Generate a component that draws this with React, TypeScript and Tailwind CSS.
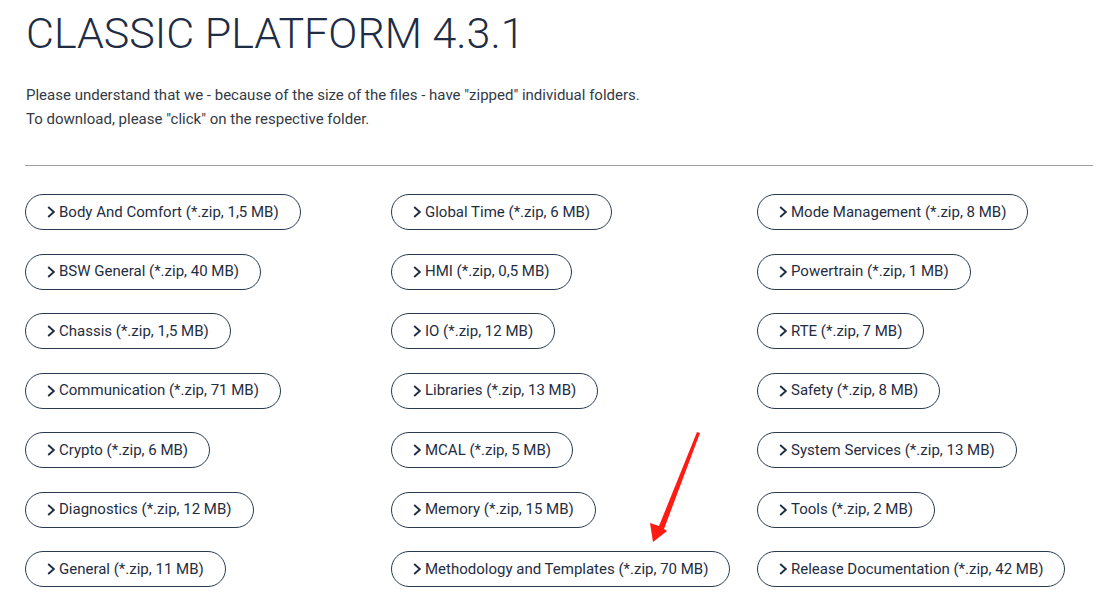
import React from "react";

const items: string[] = [
  "Body And Comfort (*.zip, 1,5 MB)",
  "Global Time (*.zip, 6 MB)",
  "Mode Management (*.zip, 8 MB)",
  "BSW General (*.zip, 40 MB)",
  "HMI (*.zip, 0,5 MB)",
  "Powertrain (*.zip, 1 MB)",
  "Chassis (*.zip, 1,5 MB)",
  "IO (*.zip, 12 MB)",
  "RTE (*.zip, 7 MB)",
  "Communication (*.zip, 71 MB)",
  "Libraries (*.zip, 13 MB)",
  "Safety (*.zip, 8 MB)",
  "Crypto (*.zip, 6 MB)",
  "MCAL (*.zip, 5 MB)",
  "System Services (*.zip, 13 MB)",
  "Diagnostics (*.zip, 12 MB)",
  "Memory (*.zip, 15 MB)",
  "Tools (*.zip, 2 MB)",
  "General (*.zip, 11 MB)",
  "Methodology and Templates (*.zip, 70 MB)",
  "Release Documentation (*.zip, 42 MB)",
];

function Chevron() {
  return (
    <svg width="8" height="12" viewBox="0 0 8 12" className="shrink-0">
      <polyline points="1.2,1 6.8,6 1.2,11" fill="none" stroke="#1f2d42" strokeWidth="1.8" />
    </svg>
  );
}

export default function App() {
  return (
    <div className="relative min-h-[612px] w-[1117px] bg-white pl-[25px] pr-[24px] pt-[9px]" style={{ fontFamily: "Roboto, 'Liberation Sans', sans-serif" }}>
      <h1 className="text-[43px] leading-[48px] font-light text-[#1e2d45] pl-[1px]">CLASSIC PLATFORM 4.3.1</h1>
      <div className="mt-[26px] text-[15px] leading-[24px] text-[#333a45] pl-[1px]">
        <p>Please understand that we - because of the size of the files - have "zipped" individual folders.</p>
        <p>To download, please "click" on the respective folder.</p>
      </div>
      <div className="mt-[34px] h-px bg-[#9ea2a8]" />
      <div className="mt-[28px] grid grid-cols-3 gap-x-[30px] gap-y-[23.5px]">
        {items.map((t) => (
          <div key={t} className="flex justify-start">
            <div className="inline-flex h-[36px] items-center gap-[4px] whitespace-nowrap rounded-full border border-[#2a3a52] pl-[21px] pr-[21px] text-[15px] text-[#1f2d42]">
              <Chevron />
              <span>{t}</span>
            </div>
          </div>
        ))}
      </div>
      <svg className="absolute left-[640px] top-[425px]" width="70" height="125" viewBox="640 425 70 125">
        <polygon points="697,432 700,433 664,529 667,531 653,542 650,523 659,526" fill="#ff1a12" />
      </svg>
    </div>
  );
}
